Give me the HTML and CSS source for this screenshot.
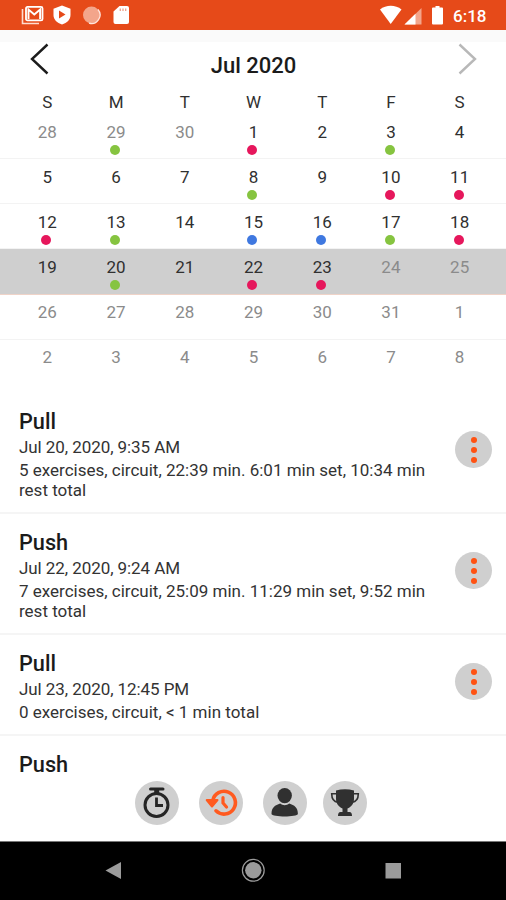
FILE: index.html
```html
<!DOCTYPE html>
<html lang="en">
<head>
<meta charset="utf-8">
<title>Workout history</title>
<link rel="stylesheet" href="styles.css">
</head>
<body>
<div class="phone">
  <header class="status">
    <svg class="status-left" width="112" height="20" viewBox="0 0 112 20">
      <path d="M1.500 4v14.500H18" fill="none" stroke="#ffdccf" stroke-width="1.6"/>
      <rect x="5" y="1.900" width="16.500" height="13.500" rx="1.5" fill="none" stroke="#fff" stroke-width="1.8"/>
      <path d="M7.500 14V4.500l5.800 5 5.800-5V14" fill="none" stroke="#fff" stroke-width="1.900"/>
      <path d="M41 .5l8.500 3.200v6.300c0 4.500-3.500 8-8.500 9.500-5-1.500-8.500-5-8.500-9.500V3.700z" fill="#fff"/>
      <path d="M38 5.500v8l6.500-4z" fill="#e64a19"/>
      <circle cx="70.500" cy="10" r="8.500" fill="#f3a58b"/>
      <path d="M77 4.500a8.500 8.500 0 0 1-9 13.600" fill="none" stroke="#ffe5dc" stroke-width="1.300"/>
      <path d="M98.500 1H106a2 2 0 0 1 2 2v14a2 2 0 0 1-2 2H94.500a2 2 0 0 1-2-2V6.500z" fill="#fff"/>
      <path d="M99.300 3.500v2.500M102 3.500v2.500M104.700 3.500v2.500" stroke="#efa08a" stroke-width="1.300"/>
    </svg>
    <svg class="status-right" width="66" height="20" viewBox="0 0 66 20">
      <path d="M2 4.500C8-.5 17.500-.5 23.500 4.500L12.700 19z" fill="#fff"/>
      <path d="M43.500 3V19.500H26.500z" fill="#f3a58b"/>
      <path d="M37.500 8.800V19.500H26.500z" fill="#fff"/>
      <path d="M57.500 1h4v1.500H64a1 1 0 0 1 1 1V18.500a1 1 0 0 1-1 1h-9a1 1 0 0 1-1-1V3.500a1 1 0 0 1 1-1h2.500z" fill="#fff"/>
    </svg>
    <span class="clock">6:18</span>
  </header>
  <div class="shade"></div>
  <main class="content">
    <section class="calendar">
      <div class="month">
        <svg width="20" height="34" viewBox="0 0 20 34"><path d="M17.500 2.500L2 17l15.500 14.500" fill="none" stroke="#1c1c1c" stroke-width="2.400"/></svg>
        <h1>Jul 2020</h1>
        <svg width="20" height="34" viewBox="0 0 20 34"><path d="M2.500 2.500L18 17 2.500 31.500" fill="none" stroke="#b8b8b8" stroke-width="2.400"/></svg>
      </div>
      <div class="week names"><span>S</span><span>M</span><span>T</span><span>W</span><span>T</span><span>F</span><span>S</span></div>
      <div class="week"><span class="out">28</span><span class="out green">29</span><span class="out">30</span><span class="red">1</span><span>2</span><span class="green">3</span><span>4</span></div>
      <div class="week"><span>5</span><span>6</span><span>7</span><span class="green">8</span><span>9</span><span class="red">10</span><span class="red">11</span></div>
      <div class="week"><span class="red">12</span><span class="green">13</span><span>14</span><span class="blue">15</span><span class="blue">16</span><span class="green">17</span><span class="red">18</span></div>
      <div class="week current"><span>19</span><span class="green">20</span><span>21</span><span class="red">22</span><span class="red">23</span><span class="out">24</span><span class="out">25</span></div>
      <div class="week later"><span class="out">26</span><span class="out">27</span><span class="out">28</span><span class="out">29</span><span class="out">30</span><span class="out">31</span><span class="out">1</span></div>
      <div class="week later last"><span class="out">2</span><span class="out">3</span><span class="out">4</span><span class="out">5</span><span class="out">6</span><span class="out">7</span><span class="out">8</span></div>
    </section>
    <section class="log">
      <article class="entry">
        <div class="text"><h2>Pull</h2><p class="date">Jul 20, 2020, 9:35 AM</p><p>5 exercises, circuit, 22:39 min. 6:01 min set, 10:34 min<br>rest total</p></div>
        <button class="more"><i></i><i></i><i></i></button>
      </article>
      <article class="entry">
        <div class="text"><h2>Push</h2><p class="date">Jul 22, 2020, 9:24 AM</p><p>7 exercises, circuit, 25:09 min. 11:29 min set, 9:52 min<br>rest total</p></div>
        <button class="more"><i></i><i></i><i></i></button>
      </article>
      <article class="entry short">
        <div class="text"><h2>Pull</h2><p class="date">Jul 23, 2020, 12:45 PM</p><p>0 exercises, circuit, &lt; 1 min total</p></div>
        <button class="more"><i></i><i></i><i></i></button>
      </article>
      <article class="entry"><div class="text"><h2>Push</h2></div></article>
    </section>
  </main>
  <nav class="tabs">
    <button class="tab"><svg width="44" height="44" viewBox="0 0 44 44"><g fill="none" stroke="#252525"><circle cx="21.500" cy="24" r="11.500" stroke-width="3"/><path d="M15.500 8h12.500" stroke-width="3" stroke-linecap="round"/><path d="M21.700 9v4" stroke-width="5"/><path d="M21.500 16.500v8h6.500" stroke-width="2.800"/></g></svg></button>
    <button class="tab"><svg width="44" height="44" viewBox="0 0 44 44"><g fill="none" stroke="#ff5a1f"><path d="M13.800 19.500A11.400 11.400 0 1 1 17 29.800" stroke-width="3.600" stroke-linecap="round"/><path d="M24 16.500v5.500l3.500 4" stroke-width="3.200" stroke-linecap="round"/></g><path d="M7.700 19h10.800L13 25.500z" fill="#ff5a1f" stroke="#ff5a1f" stroke-width="2" stroke-linejoin="round"/></svg></button>
    <button class="tab"><svg width="44" height="44" viewBox="0 0 44 44"><g fill="#303030"><ellipse cx="21.700" cy="14.600" rx="7.200" ry="7.700"/><path d="M8.500 33c0-6.500 3.500-8.800 8.700-10.500 2.700 2.200 6.300 2.200 9 0 5.200 1.700 8.700 4 8.700 10.500 0 1.500-7 2.500-13.200 2.500S8.500 34.500 8.500 33z"/></g></svg></button>
    <button class="tab"><svg width="44" height="44" viewBox="0 0 44 44"><path d="M13 9.500q9-2.500 18 0v8.500c0 5-3.500 8.500-6.500 9.500v3.500h2q2.500 0 2.500 4h-14q0-4 2.500-4h2v-3.500c-3-1-6.500-4.500-6.500-9.500z" fill="#303030"/><path d="M13 12.800H8.700c0 5 2 8 6.300 8.500M31 12.800h4.300c0 5-2 8-6.300 8.500" fill="none" stroke="#303030" stroke-width="1.600"/></svg></button>
  </nav>
  <footer class="system">
    <svg width="506" height="58" viewBox="0 0 506 58"><g fill="#9b9b9b"><path d="M105.500 28.500l15.500-8.500v17z"/><circle cx="253.300" cy="28.300" r="8.200"/><rect x="385.500" y="21" width="15.500" height="15.500"/></g><circle cx="253.300" cy="28.300" r="10.900" fill="none" stroke="#9b9b9b" stroke-width="1.200"/></svg>
  </footer>
</div>
</body>
</html>
```
FILE: styles.css
```css
* { box-sizing: border-box; }
body, h1, h2, p { margin: 0; }
body { font-family: Roboto, sans-serif; color: #303030; background: #fff; }
svg { display: block; }
button { border: 0; padding: 0; background: #cfcfcf; border-radius: 50%; }
.phone { position: relative; height: 900px; display: flex; flex-direction: column; overflow: hidden; }
.status { flex: none; height: 30px; display: flex; align-items: center; padding: 0 18px 0 21px; background: #e64a19; color: #fff; }
.status-right { margin-left: auto; margin-right: 9px; }
.clock { width: 35px; font-size: 17px; font-weight: 500; line-height: 30px; padding-top: 1px; white-space: nowrap; }
.shade { flex: none; height: 12px; background: #fafafa; }
.content { flex: 1; min-height: 0; overflow: hidden; }
.month { height: 48px; display: flex; justify-content: space-between; align-items: flex-start; padding: 0 29px 0 30px; }
.month h1 { font-size: 22px; font-weight: 500; line-height: 25px; padding-top: 11px; color: #1b1b1b; }
.week { height: 45px; display: grid; grid-template-columns: repeat(7, 1fr); padding: 0 12px 0 13px; border-bottom: 1px solid #f3f3f3; font-size: 17px; text-align: center; }
.week span { line-height: 20px; padding-top: 8px; }
.week.names { height: 24px; border: 0; }
.week.names span { padding-top: 2px; }
.week.current { height: 46px; background: #cfcfcf; border-bottom-color: #efd3c8; }
.week.later span { padding-top: 7px; }
.week.last { height: 44px; border: 0; }
.out { color: #8b8b8b; }
.red::after, .green::after, .blue::after { content: ""; display: block; width: 10px; height: 10px; margin: 3px auto 0; border-radius: 50%; transform: translateX(-1px); }
.red::after { background: #e6175c; }
.green::after { background: #86c440; }
.blue::after { background: #3f78e0; }
.log { padding-top: 9px; }
.entry { height: 121px; display: flex; justify-content: space-between; align-items: center; padding: 0 14px 0 19px; border-bottom: 2px solid #f5f5f5; }
.entry.short { height: 101px; }
.text { align-self: flex-start; padding-top: 16px; font-size: 17px; line-height: 20px; color: #333; white-space: nowrap; }
.text h2 { font-size: 21.700px; font-weight: 500; line-height: 26px; color: #1b1b1b; }
.date { padding: 2px 0 3px; letter-spacing: -.07px; }
.more { width: 37px; height: 37px; margin-top: -6px; display: flex; flex-direction: column; align-items: center; justify-content: center; gap: 4px; }
.more i { width: 6px; height: 6px; border-radius: 50%; background: #ff5212; }
.tabs { position: absolute; top: 781px; left: 135px; display: flex; }
.tab { width: 44px; height: 44px; margin-right: 20px; }
.tab:nth-child(3) { margin-right: 16px; }
.system { flex: none; height: 59px; background: #000; border-top: 1px solid #777; overflow: hidden; }
```
